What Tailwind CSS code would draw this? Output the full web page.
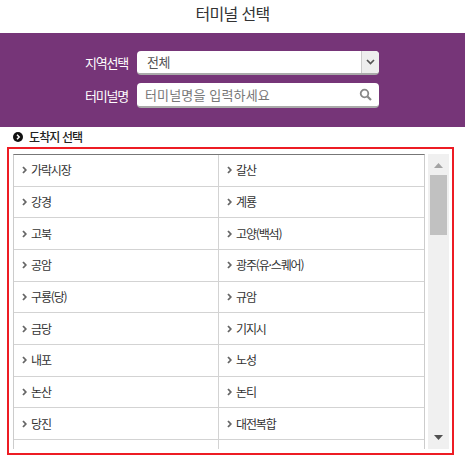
<!DOCTYPE html>
<html lang="ko">
<head>
    <meta charset="UTF-8">
    <meta name="viewport" content="width=device-width, initial-scale=1.0">
    <title>터미널 선택</title>
    <script src="https://cdn.jsdelivr.net/npm/@tailwindcss/browser@4"></script>
</head>
<body class="bg-white overflow-hidden font-['Noto_Sans_CJK_KR','Noto_Sans',sans-serif] text-[#333]">

    <!-- 제목 -->
    <h1 class="h-[33px] flex items-center justify-center text-[16px] font-normal text-[#333] tracking-[-0.7px] leading-none pb-[8px]">터미널 선택</h1>

    <!-- 검색 영역 -->
    <div class="h-[94px] bg-[#763578] pt-[18px] pl-[7px] flex flex-col gap-[8px]">
        <div class="flex items-center gap-[9px]">
            <label class="w-[121px] text-right text-[13px] text-white tracking-[-1.2px]">지역선택</label>
            <div class="w-[242px] h-[24px] bg-white rounded-[4px] border-b-2 border-[#aaa] flex items-center text-[13px] text-[#555]">
                <span class="flex-1 pl-[10px] tracking-[-0.5px]">전체</span>
                <span class="w-[18px] h-full bg-[#eee] border-l border-[#ccc] rounded-r-[4px] flex items-center justify-center">
                    <svg width="9" height="6" viewBox="0 0 9 6" fill="none" stroke="#555" stroke-width="1.7"><path d="M1 1l3.500 3.500L8 1"/></svg>
                </span>
            </div>
        </div>
        <div class="flex items-center gap-[9px]">
            <label class="w-[121px] text-right text-[13px] text-white tracking-[-1.2px]">터미널명</label>
            <div class="w-[242px] h-[25px] bg-white rounded-[4px] border-b-2 border-[#aaa] flex items-center text-[13px] text-[#777]">
                <span class="flex-1 pl-[8px] tracking-[0.15px]">터미널명을 입력하세요</span>
                <svg class="mr-[7px]" width="13" height="13" viewBox="0 0 13 13" fill="none" stroke="#888"><circle cx="5.500" cy="5.500" r="3.800" stroke-width="1.800"/><path d="M8.500 8.500l3.500 3.500" stroke-width="2.200"/></svg>
            </div>
        </div>
    </div>

    <!-- 도착지 선택 -->
    <div class="h-[20px] pl-[13px] flex items-center gap-[6px] text-[12px] font-medium text-[#222] tracking-[-0.9px]">
        <svg width="10" height="10" viewBox="0 0 10 10"><circle cx="5" cy="5" r="5" fill="#111"/><path d="M4 2.800L6.200 5 4 7.200" fill="none" stroke="#fff" stroke-width="1.500"/></svg>
        <span>도착지 선택</span>
    </div>

    <div class="ml-[7px] w-[447px] h-[308px] border-2 border-[#ed1c24] pl-[4px] pt-[5px] flex overflow-hidden">
        <!-- 목록 -->
        <div class="w-[412px] h-[295px] overflow-hidden border-t border-l border-r border-t-[#777] border-x-[#ccc]">
            <ul class="grid grid-cols-[205px_1fr] auto-rows-[31.67px] text-[12px] text-[#333] tracking-[-1.15px]">
                <li class="flex items-center gap-[4px] pl-[8px] border-b border-r border-[#d3d3d3]"><svg width="5" height="8" viewBox="0 0 5 8" fill="none" stroke="#666" stroke-width="1.800"><path d="M1 1l2.800 3L1 7"/></svg>가락시장</li>
                <li class="flex items-center gap-[4px] pl-[8px] border-b border-[#d3d3d3]"><svg width="5" height="8" viewBox="0 0 5 8" fill="none" stroke="#666" stroke-width="1.800"><path d="M1 1l2.800 3L1 7"/></svg>갈산</li>
                <li class="flex items-center gap-[4px] pl-[8px] border-b border-r border-[#d3d3d3]"><svg width="5" height="8" viewBox="0 0 5 8" fill="none" stroke="#666" stroke-width="1.800"><path d="M1 1l2.800 3L1 7"/></svg>강경</li>
                <li class="flex items-center gap-[4px] pl-[8px] border-b border-[#d3d3d3]"><svg width="5" height="8" viewBox="0 0 5 8" fill="none" stroke="#666" stroke-width="1.800"><path d="M1 1l2.800 3L1 7"/></svg>계룡</li>
                <li class="flex items-center gap-[4px] pl-[8px] border-b border-r border-[#d3d3d3]"><svg width="5" height="8" viewBox="0 0 5 8" fill="none" stroke="#666" stroke-width="1.800"><path d="M1 1l2.800 3L1 7"/></svg>고북</li>
                <li class="flex items-center gap-[4px] pl-[8px] border-b border-[#d3d3d3]"><svg width="5" height="8" viewBox="0 0 5 8" fill="none" stroke="#666" stroke-width="1.800"><path d="M1 1l2.800 3L1 7"/></svg>고양(백석)</li>
                <li class="flex items-center gap-[4px] pl-[8px] border-b border-r border-[#d3d3d3]"><svg width="5" height="8" viewBox="0 0 5 8" fill="none" stroke="#666" stroke-width="1.800"><path d="M1 1l2.800 3L1 7"/></svg>공암</li>
                <li class="flex items-center gap-[4px] pl-[8px] border-b border-[#d3d3d3]"><svg width="5" height="8" viewBox="0 0 5 8" fill="none" stroke="#666" stroke-width="1.800"><path d="M1 1l2.800 3L1 7"/></svg>광주(유·스퀘어)</li>
                <li class="flex items-center gap-[4px] pl-[8px] border-b border-r border-[#d3d3d3]"><svg width="5" height="8" viewBox="0 0 5 8" fill="none" stroke="#666" stroke-width="1.800"><path d="M1 1l2.800 3L1 7"/></svg>구룡(당)</li>
                <li class="flex items-center gap-[4px] pl-[8px] border-b border-[#d3d3d3]"><svg width="5" height="8" viewBox="0 0 5 8" fill="none" stroke="#666" stroke-width="1.800"><path d="M1 1l2.800 3L1 7"/></svg>규암</li>
                <li class="flex items-center gap-[4px] pl-[8px] border-b border-r border-[#d3d3d3]"><svg width="5" height="8" viewBox="0 0 5 8" fill="none" stroke="#666" stroke-width="1.800"><path d="M1 1l2.800 3L1 7"/></svg>금당</li>
                <li class="flex items-center gap-[4px] pl-[8px] border-b border-[#d3d3d3]"><svg width="5" height="8" viewBox="0 0 5 8" fill="none" stroke="#666" stroke-width="1.800"><path d="M1 1l2.800 3L1 7"/></svg>기지시</li>
                <li class="flex items-center gap-[4px] pl-[8px] border-b border-r border-[#d3d3d3]"><svg width="5" height="8" viewBox="0 0 5 8" fill="none" stroke="#666" stroke-width="1.800"><path d="M1 1l2.800 3L1 7"/></svg>내포</li>
                <li class="flex items-center gap-[4px] pl-[8px] border-b border-[#d3d3d3]"><svg width="5" height="8" viewBox="0 0 5 8" fill="none" stroke="#666" stroke-width="1.800"><path d="M1 1l2.800 3L1 7"/></svg>노성</li>
                <li class="flex items-center gap-[4px] pl-[8px] border-b border-r border-[#d3d3d3]"><svg width="5" height="8" viewBox="0 0 5 8" fill="none" stroke="#666" stroke-width="1.800"><path d="M1 1l2.800 3L1 7"/></svg>논산</li>
                <li class="flex items-center gap-[4px] pl-[8px] border-b border-[#d3d3d3]"><svg width="5" height="8" viewBox="0 0 5 8" fill="none" stroke="#666" stroke-width="1.800"><path d="M1 1l2.800 3L1 7"/></svg>논티</li>
                <li class="flex items-center gap-[4px] pl-[8px] border-b border-r border-[#d3d3d3]"><svg width="5" height="8" viewBox="0 0 5 8" fill="none" stroke="#666" stroke-width="1.800"><path d="M1 1l2.800 3L1 7"/></svg>당진</li>
                <li class="flex items-center gap-[4px] pl-[8px] border-b border-[#d3d3d3]"><svg width="5" height="8" viewBox="0 0 5 8" fill="none" stroke="#666" stroke-width="1.800"><path d="M1 1l2.800 3L1 7"/></svg>대전복합</li>
                <li class="border-r border-[#d3d3d3]"></li>
                <li></li>
            </ul>
        </div>
        <!-- 스크롤바 -->
        <div class="ml-[3px] w-[21px] h-[295px] bg-[#f0f0f0] flex flex-col items-center relative">
            <svg class="mt-[9px]" width="9" height="5" viewBox="0 0 9 5"><path d="M4.500 0L9 5H0z" fill="#a3a3a3"/></svg>
            <div class="mt-[7px] w-[17px] h-[60px] bg-[#c1c1c1]"></div>
            <svg class="absolute bottom-[9px] left-[6px]" width="9" height="5" viewBox="0 0 9 5"><path d="M0 0h9L4.500 5z" fill="#505050"/></svg>
        </div>
    </div>
</body>
</html>
